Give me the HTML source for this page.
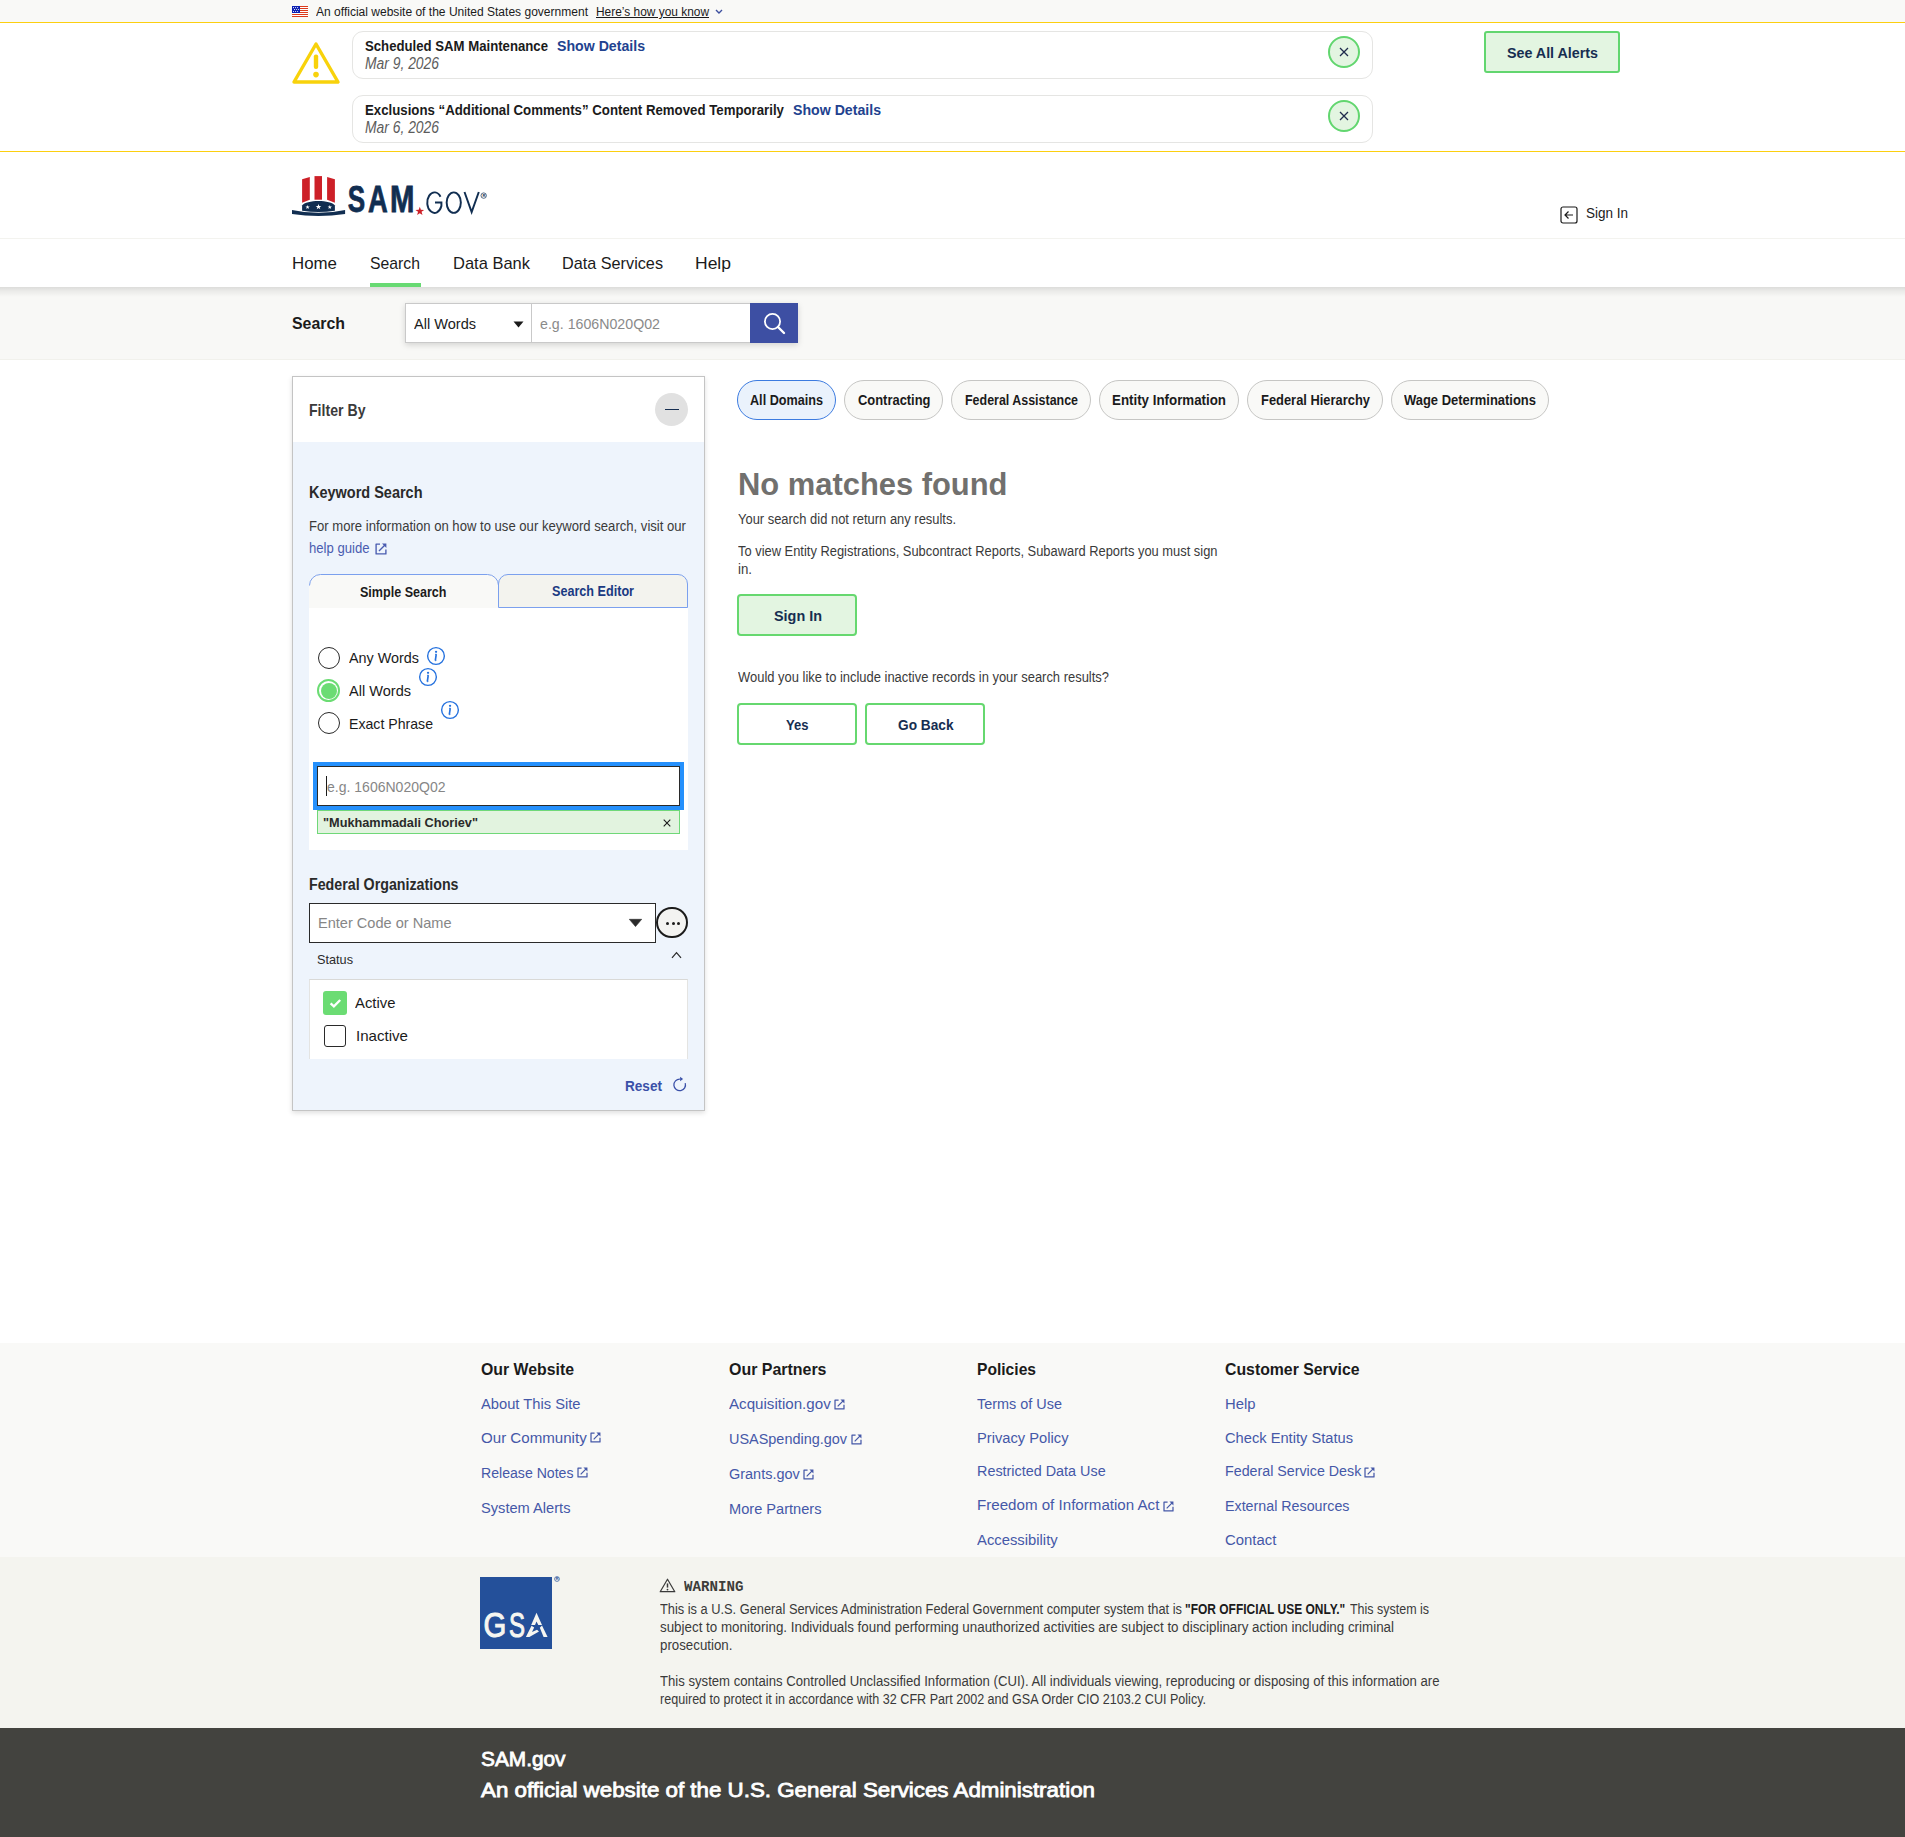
<!DOCTYPE html>
<html lang="en"><head>
<meta charset="utf-8">
<title>SAM.gov | Search</title>
<style>
*{box-sizing:border-box;margin:0;padding:0}
html,body{width:1905px;height:1837px;overflow:hidden;background:#fff}
body{position:relative;font-family:"Liberation Sans",sans-serif;color:#1b1b1b;font-size:15px}
.a{position:absolute}
.t{position:absolute;white-space:nowrap;line-height:1;display:block}
.b{font-weight:700}
.i{font-style:italic}
.lnk{color:#3d4f9f}
svg{position:absolute;overflow:visible}

.pill{top:380px;height:40px;border-radius:20px;background:#f9f9f7;border:1px solid #c6c6c4}
.fh{top:1360.5px;font-size:17px;color:#1b1b1b}
.fl{font-size:15.5px;color:#4558a8}
.fx{color:#4558a8}
.wp{font-size:13.8px;color:#3a3a3a}
.sb{font-weight:400;-webkit-text-stroke:0.8px #fff}
</style>
</head>
<body>
<svg width="0" height="0" style="left:0;top:0"><defs>
<g id="ext"><path d="M5.0 1.1 H1.1 V10.9 H10.9 V6.4" fill="none" stroke="currentColor" stroke-width="1.35" stroke-linejoin="round"></path><path d="M4.0 8.0 L10.2 1.8" fill="none" stroke="currentColor" stroke-width="1.35"></path><path d="M7.0 0.6 H11.4 V5.0 Z" fill="currentColor"></path></g>
<g id="info"><circle cx="9" cy="9" r="8.35" fill="none" stroke="#2672de" stroke-width="1.4"></circle><circle cx="9.05" cy="4.85" r="1.15" fill="#2672de"></circle><path d="M9.25 7.2 L8.3 13.7" stroke="#2672de" stroke-width="1.65" fill="none"></path><path d="M8.0 7.4 L9.4 7.1 M8.0 13.8 L9.3 13.5" stroke="#2672de" stroke-width="0.8" fill="none"></path></g>
</defs></svg>

<!-- ===== GOV BANNER ===== -->
<div class="a" style="left:0;top:0;width:1905px;height:22px;background:#f9f9f7"></div>
<svg style="left:292px;top:6px" width="16" height="11" viewBox="0 0 16 11"><rect width="16" height="11" fill="#fff"></rect><g fill="#dc3a1c" shape-rendering="crispEdges"><rect y="0" width="16" height="1"></rect><rect y="2" width="16" height="1"></rect><rect y="4" width="16" height="1"></rect><rect y="6" width="16" height="1"></rect><rect y="8" width="16" height="1"></rect><rect y="10" width="16" height="1"></rect></g><rect width="8" height="7" fill="#0d20b3" shape-rendering="crispEdges"></rect><g fill="#fff"><circle cx="1.5" cy="1.6" r=".55"></circle><circle cx="3.6" cy="1.6" r=".55"></circle><circle cx="5.6" cy="1.6" r=".55"></circle><circle cx="2.5" cy="3.55" r=".55"></circle><circle cx="4.6" cy="3.55" r=".55"></circle><circle cx="6.6" cy="3.55" r=".55"></circle><circle cx="1.5" cy="5.5" r=".55"></circle><circle cx="3.6" cy="5.5" r=".55"></circle><circle cx="5.6" cy="5.5" r=".55"></circle></g></svg>
<span class="t" style="left: 316px; top: 6px; font-size: 12px; color: rgb(27, 27, 27); white-space: nowrap; transform-origin: 0px 50%; transform: scaleX(1.0027);">An official website of the United States government</span>
<span class="t" style="left: 596px; top: 6px; font-size: 12px; color: rgb(27, 27, 27); text-decoration: underline; white-space: nowrap; transform-origin: 0px 50%; transform: scaleX(0.9926);">Here’s how you know</span>
<svg style="left:715px;top:9px" width="8" height="6" viewBox="0 0 8 6"><path d="M1 1 L4 4 L7 1" fill="none" stroke="#3d4f9f" stroke-width="1.4"></path></svg>

<!-- ===== ALERTS ===== -->
<div class="a" style="left:0;top:22px;width:1905px;height:130px;background:#fff;border-top:1px solid #fccf10;border-bottom:1px solid #fccf10"></div>
<svg style="left:291px;top:41px" width="50" height="44" viewBox="0 0 50 44">
  <path d="M25 3 L47 41 L3 41 Z" fill="none" stroke="#f8d20b" stroke-width="3.4" stroke-linejoin="round"></path>
  <rect x="22.8" y="13.5" width="4.4" height="14.5" rx="2" fill="#f8d20b"></rect>
  <circle cx="25" cy="33.6" r="2.8" fill="#f8d20b"></circle>
</svg>
<div class="a" style="left:352px;top:31px;width:1021px;height:48px;border:1px solid #e5e5e3;border-radius:11px;background:#fff"></div>
<div class="a" style="left:352px;top:95px;width:1021px;height:48px;border:1px solid #e5e5e3;border-radius:11px;background:#fff"></div>
<span class="t b" style="left: 365px; top: 39.2px; font-size: 14.6px; white-space: nowrap; transform-origin: 0px 50%; transform: scaleX(0.9027);">Scheduled SAM Maintenance</span>
<span class="t b" style="left: 557px; top: 39.2px; font-size: 14.6px; color: rgb(34, 66, 143); white-space: nowrap; transform-origin: 0px 50%; transform: scaleX(0.9689);">Show Details</span>
<span class="t i" style="left: 365px; top: 56px; font-size: 15.8px; color: rgb(92, 92, 92); white-space: nowrap; transform-origin: 0px 50%; transform: scaleX(0.8777);">Mar 9, 2026</span>
<span class="t b" style="left: 365px; top: 103px; font-size: 14.6px; white-space: nowrap; transform-origin: 0px 50%; transform: scaleX(0.907);">Exclusions “Additional Comments” Content Removed Temporarily</span>
<span class="t b" style="left: 793px; top: 103px; font-size: 14.6px; color: rgb(34, 66, 143); white-space: nowrap; transform-origin: 0px 50%; transform: scaleX(0.9689);">Show Details</span>
<span class="t i" style="left: 365px; top: 120px; font-size: 15.8px; color: rgb(92, 92, 92); white-space: nowrap; transform-origin: 0px 50%; transform: scaleX(0.8777);">Mar 6, 2026</span>
<!-- close circles -->
<div class="a" style="left:1328px;top:36px;width:32px;height:32px;border-radius:50%;background:#e3f5e1;border:2px solid #62d66f"></div>
<svg style="left:1339px;top:47px" width="10" height="10" viewBox="0 0 10 10"><path d="M1 1 L9 9 M9 1 L1 9" stroke="#1f2b4d" stroke-width="1.3" fill="none"></path></svg>
<div class="a" style="left:1328px;top:100px;width:32px;height:32px;border-radius:50%;background:#e3f5e1;border:2px solid #62d66f"></div>
<svg style="left:1339px;top:111px" width="10" height="10" viewBox="0 0 10 10"><path d="M1 1 L9 9 M9 1 L1 9" stroke="#1f2b4d" stroke-width="1.3" fill="none"></path></svg>
<!-- See all alerts -->
<div class="a" style="left:1484px;top:31px;width:136px;height:42px;border-radius:3px;background:#e3f5e1;border:2px solid #62d66f"></div>
<span class="t b" style="left: 1507px; top: 45px; font-size: 15px; color: rgb(22, 46, 81); white-space: nowrap; transform-origin: 0px 50%; transform: scaleX(0.9518);">See All Alerts</span>

<!-- ===== HEADER ===== -->
<div class="a" style="left:0;top:238px;width:1905px;height:1px;background:#f3f3ef"></div>
<svg style="left:288px;top:172px" width="204" height="48" viewBox="0 0 204 48">
  <g fill="#cd2028">
    <path d="M14.1 7.3 L21.8 5.1 L21.8 27.7 L14.1 30.7 Z"></path>
    <rect x="26.5" y="4.1" width="7.5" height="23.6"></rect>
    <path d="M39.1 5.1 L46.9 7.3 L46.9 30.7 L39.1 27.7 Z"></path>
  </g>
  <g fill="#112e51">
    <path d="M14.1 33.6 C18 27.4 43 27.4 46.9 33.6 L46.9 38.7 Q30.5 41.2 14.1 38.7 Z"></path>
    <path d="M4 37.9 Q30.5 43.7 57.1 37.9 L57.1 42 Q30.5 46.2 4 42 Z"></path>
  </g>
  <g fill="#fff">
    <polygon points="19.60,32.90 20.14,34.46 21.79,34.49 20.47,35.48 20.95,37.06 19.60,36.12 18.25,37.06 18.73,35.48 17.41,34.49 19.06,34.46"></polygon>
    <polygon points="30.50,31.90 31.21,33.93 33.35,33.97 31.64,35.27 32.26,37.33 30.50,36.10 28.74,37.33 29.36,35.27 27.65,33.97 29.79,33.93"></polygon>
    <polygon points="41.80,32.90 42.34,34.46 43.99,34.49 42.67,35.48 43.15,37.06 41.80,36.12 40.45,37.06 40.93,35.48 39.61,34.49 41.26,34.46"></polygon>
  </g>
  <g font-family="Liberation Sans, sans-serif" font-weight="700" font-size="37.1" fill="#112e51" stroke="#112e51" stroke-width="0.8"><text x="59.78" y="40.1" textLength="17.39" lengthAdjust="spacingAndGlyphs">S</text><text x="79.95" y="40.1" textLength="19.75" lengthAdjust="spacingAndGlyphs">A</text><text x="102.04" y="40.1" textLength="24.40" lengthAdjust="spacingAndGlyphs">M</text></g>
  <polygon fill="#cd2028" points="131.80,34.70 132.88,37.81 136.17,37.88 133.55,39.87 134.50,43.02 131.80,41.14 129.10,43.02 130.05,39.87 127.43,37.88 130.72,37.81"></polygon>
  <g fill="none" stroke="#112e51" stroke-width="1.95">
    <path d="M152.5 24.7 A7.3 10.25 0 1 0 153.4 34.1 L153.4 30.4 L147 30.4"></path>
    <ellipse cx="165.75" cy="30.6" rx="7.1" ry="10.25"></ellipse>
    <path d="M176.5 20 L183.65 40.2 L190.8 20" stroke-linejoin="miter"></path>
    <circle cx="195.7" cy="23.6" r="2.7" stroke-width="0.7"></circle>
  </g>
  <text x="194.4" y="25.1" font-family="Liberation Sans, sans-serif" font-weight="700" font-size="4.2" fill="#112e51">R</text>
</svg>
<svg style="left:1559.5px;top:205.5px" width="18" height="18" viewBox="0 0 18 18">
  <rect x="1" y="1" width="16" height="16" rx="2" fill="none" stroke="#1b1b1b" stroke-width="1.2"></rect>
  <path d="M13 9 L5 9 M8.5 5.5 L5 9 L8.5 12.5" fill="none" stroke="#1b1b1b" stroke-width="1.2"></path>
</svg>
<span class="t" style="left: 1586px; top: 205px; font-size: 15.5px; color: rgb(27, 27, 27); white-space: nowrap; transform-origin: 0px 50%; transform: scaleX(0.8702);">Sign In</span>

<!-- ===== NAV ===== -->
<span class="t" style="left: 292px; top: 255px; font-size: 17px; white-space: nowrap; transform-origin: 0px 50%; transform: scaleX(0.9921);">Home</span>
<span class="t" style="left: 370px; top: 255px; font-size: 17px; white-space: nowrap; transform-origin: 0px 50%; transform: scaleX(0.9281);">Search</span>
<span class="t" style="left: 453px; top: 255px; font-size: 17px; white-space: nowrap; transform-origin: 0px 50%; transform: scaleX(0.9699);">Data Bank</span>
<span class="t" style="left: 562px; top: 255px; font-size: 17px; white-space: nowrap; transform-origin: 0px 50%; transform: scaleX(0.9544);">Data Services</span>
<span class="t" style="left: 695px; top: 255px; font-size: 17px; white-space: nowrap; transform-origin: 0px 50%; transform: scaleX(1.0295);">Help</span>
<div class="a" style="left:370px;top:283px;width:51px;height:4px;background:#68da73"></div>

<!-- ===== SEARCH BAR ===== -->
<div class="a" style="left:0;top:287px;width:1905px;height:73px;background:linear-gradient(to bottom,rgba(0,0,0,.115) 0,rgba(0,0,0,.055) 4px,rgba(0,0,0,0) 10px),#f8f8f6;border-bottom:1px solid #f1f1ec"></div>
<span class="t b" style="left: 292px; top: 315px; font-size: 17px; white-space: nowrap; transform-origin: 0px 50%; transform: scaleX(0.9347);">Search</span>
<div class="a" style="left:405px;top:303px;width:393px;height:40px;background:#fff;border:1px solid #c9c9c9;box-shadow:0 2px 6px rgba(0,0,0,.15)"></div>
<div class="a" style="left:531px;top:304px;width:1px;height:38px;background:#c9c9c9"></div>
<span class="t" style="left: 414px; top: 316px; font-size: 15px; white-space: nowrap; transform-origin: 0px 50%; transform: scaleX(0.9702);">All Words</span>
<svg style="left:513px;top:321px" width="11" height="7" viewBox="0 0 11 7"><path d="M0.5 0.5 L10.5 0.5 L5.5 6.5 Z" fill="#1b1b1b"></path></svg>
<span class="t" style="left: 540px; top: 316px; font-size: 15px; color: rgb(138, 138, 138); white-space: nowrap; transform-origin: 0px 50%; transform: scaleX(0.9465);">e.g. 1606N020Q02</span>
<div class="a" style="left:750px;top:303px;width:48px;height:40px;background:#3d4fa3"></div>
<svg style="left:762px;top:311px" width="24" height="24" viewBox="0 0 24 24"><circle cx="10.5" cy="10.5" r="7.6" fill="none" stroke="#fff" stroke-width="1.8"></circle><path d="M16 16 L22 22" stroke="#fff" stroke-width="2.4" stroke-linecap="round"></path></svg>


<!-- ===== FILTER PANEL ===== -->
<div class="a" style="left:292px;top:376px;width:413px;height:735px;background:#eef4fc;border:1px solid #c4c4c4;box-shadow:0 2px 5px rgba(0,0,0,.13)"></div>
<div class="a" style="left:293px;top:377px;width:411px;height:65px;background:#fff"></div>
<span class="t b" style="left: 309px; top: 402px; font-size: 16.5px; color: rgb(59, 59, 59); white-space: nowrap; transform-origin: 0px 50%; transform: scaleX(0.8557);">Filter By</span>
<div class="a" style="left:655px;top:393px;width:33px;height:33px;border-radius:50%;background:#e1e1e1"></div>
<div class="a" style="left:665px;top:409px;width:14px;height:1px;background:#162e51"></div>

<span class="t b" style="left: 309px; top: 485px; font-size: 15.6px; color: rgb(42, 42, 42); white-space: nowrap; transform-origin: 0px 50%; transform: scaleX(0.9288);">Keyword Search</span>
<span class="t" style="left: 309px; top: 518.7px; font-size: 14px; color: rgb(58, 58, 58); white-space: nowrap; transform-origin: 0px 50%; transform: scaleX(0.9353);">For more information on how to use our keyword search, visit our</span>
<span class="t" style="left: 309px; top: 540.7px; font-size: 14px; color: rgb(74, 92, 176); white-space: nowrap; transform-origin: 0px 50%; transform: scaleX(0.9362);">help guide</span>
<svg style="left:374.5px;top:543px;color:#4a5cb0" width="13" height="12" viewBox="0 0 13 12"><use href="#ext"></use></svg>

<!-- tabs -->
<div class="a" style="left:309px;top:574px;width:190px;height:34px;background:#f9f9f7;border-radius:10px 10px 0 0"></div>
<svg style="left:309px;top:574px" width="190" height="14" viewBox="0 0 190 14"><path d="M0.5 11.5 A11 11 0 0 1 11.5 0.5 L178.5 0.5 A11 11 0 0 1 189.5 11.5" fill="none" stroke="#7ba0ee" stroke-width="1"></path></svg>
<div class="a" style="left:498px;top:574px;width:190px;height:34px;background:#f3f3ee;border:1px solid #7ba0ee;border-radius:10px 10px 0 0"></div>
<span class="t b" style="left: 360px; top: 585px; font-size: 14px; color: rgb(27, 27, 27); white-space: nowrap; transform-origin: 0px 50%; transform: scaleX(0.8964);">Simple Search</span>
<span class="t b" style="left: 552px; top: 584px; font-size: 14px; color: rgb(26, 58, 130); white-space: nowrap; transform-origin: 0px 50%; transform: scaleX(0.9008);">Search Editor</span>
<div class="a" style="left:309px;top:608px;width:379px;height:242px;background:#fff"></div>

<!-- radios -->
<div class="a" style="left:318px;top:647px;width:22px;height:22px;border-radius:50%;border:1.5px solid #2a2a2a;background:#fff"></div>
<div class="a" style="left:317px;top:679px;width:23px;height:23px;border-radius:50%;border:2px solid #6bdc73;background:#fff"></div>
<div class="a" style="left:320.5px;top:682.5px;width:16px;height:16px;border-radius:50%;background:#6bdc73"></div>
<div class="a" style="left:318px;top:712px;width:22px;height:22px;border-radius:50%;border:1.5px solid #2a2a2a;background:#fff"></div>
<span class="t" style="left: 349px; top: 649.5px; font-size: 15px; color: rgb(27, 27, 27); white-space: nowrap; transform-origin: 0px 50%; transform: scaleX(0.9577);">Any Words</span>
<span class="t" style="left: 349px; top: 682.5px; font-size: 15px; color: rgb(27, 27, 27); white-space: nowrap; transform-origin: 0px 50%; transform: scaleX(0.9702);">All Words</span>
<span class="t" style="left: 349px; top: 715.5px; font-size: 15px; color: rgb(27, 27, 27); white-space: nowrap; transform-origin: 0px 50%; transform: scaleX(0.9415);">Exact Phrase</span>
<svg style="left:427.2px;top:647.2px" width="18" height="18" viewBox="0 0 18 18"><use href="#info"></use></svg>
<svg style="left:419.1px;top:668.2px" width="18" height="18" viewBox="0 0 18 18"><use href="#info"></use></svg>
<svg style="left:441.2px;top:701px" width="18" height="18" viewBox="0 0 18 18"><use href="#info"></use></svg>

<!-- focused input -->
<div class="a" style="left:313px;top:762px;width:371px;height:48px;background:#fff;border:4px solid #2590fc"></div>
<div class="a" style="left:317px;top:766px;width:363px;height:40px;background:#fff;border:1px solid #2a2a2a"></div>
<div class="a" style="left:326px;top:776px;width:1px;height:20px;background:#1b1b1b"></div>
<span class="t" style="left: 327px; top: 779px; font-size: 15px; color: rgb(134, 134, 134); white-space: nowrap; transform-origin: 0px 50%; transform: scaleX(0.9347);">e.g. 1606N020Q02</span>
<!-- chip -->
<div class="a" style="left:317px;top:810px;width:363px;height:24px;background:#e2f3df;border:1px solid #6fd878"></div>
<span class="t b" style="left: 322.8px; top: 815.5px; font-size: 13.4px; color: rgb(42, 42, 42); white-space: nowrap; transform-origin: 0px 50%; transform: scaleX(0.9508);">"Mukhammadali Choriev"</span>
<svg style="left:662.7px;top:819px" width="8" height="8" viewBox="0 0 8 8"><path d="M0.7 0.7 L7.3 7.3 M7.3 0.7 L0.7 7.3" stroke="#1b1b1b" stroke-width="1.1" fill="none"></path></svg>

<!-- Federal orgs -->
<span class="t b" style="left: 309px; top: 877px; font-size: 15.6px; color: rgb(42, 42, 42); white-space: nowrap; transform-origin: 0px 50%; transform: scaleX(0.9128);">Federal Organizations</span>
<div class="a" style="left:309px;top:903px;width:347px;height:40px;background:#fff;border:1px solid #2a2a2a"></div>
<span class="t" style="left: 318px; top: 915.3px; font-size: 15px; color: rgb(134, 134, 134); white-space: nowrap; transform-origin: 0px 50%; transform: scaleX(0.9704);">Enter Code or Name</span>
<svg style="left:629.3px;top:918.7px" width="13" height="8" viewBox="0 0 13 8"><path d="M0.3 0.3 L12.7 0.3 L6.5 7.6 Z" fill="#2a2a2a" stroke="#2a2a2a" stroke-width=".6" stroke-linejoin="round"></path></svg>
<div class="a" style="left:656px;top:906.8px;width:31.5px;height:31.5px;border-radius:50%;background:#f3f3f1;border:2px solid #1b1b1b"></div>
<div class="a" style="left:666.3px;top:922px;width:3px;height:3px;border-radius:50%;background:#1b1b1b"></div>
<div class="a" style="left:671.8px;top:922px;width:3px;height:3px;border-radius:50%;background:#1b1b1b"></div>
<div class="a" style="left:677.3px;top:922px;width:3px;height:3px;border-radius:50%;background:#1b1b1b"></div>

<!-- Status -->
<span class="t" style="left: 316.8px; top: 952.5px; font-size: 13.2px; color: rgb(42, 42, 42); white-space: nowrap; transform-origin: 0px 50%; transform: scaleX(0.9628);">Status</span>
<svg style="left:670.8px;top:950.8px" width="11" height="8" viewBox="0 0 11 8"><path d="M1 6.8 L5.5 1.6 L10 6.8" fill="none" stroke="#2a2a2a" stroke-width="1.2"></path></svg>
<div class="a" style="left:309px;top:979px;width:379px;height:80px;background:#fff;border:1px solid #e4e4e2;border-top:1.5px solid #d9d9d7;border-bottom:none"></div>
<div class="a" style="left:323px;top:991px;width:24px;height:24px;border-radius:3px;background:#6bdc73"></div>
<svg style="left:329px;top:997.5px" width="13" height="11" viewBox="0 0 13 11"><path d="M1.6 5.3 L4.9 8.4 L11.2 2" fill="none" stroke="#fff" stroke-width="2.3"></path></svg>
<span class="t" style="left: 355px; top: 995.3px; font-size: 15px; color: rgb(27, 27, 27); white-space: nowrap; transform-origin: 0px 50%; transform: scaleX(0.9912);">Active</span>
<div class="a" style="left:324px;top:1025px;width:22px;height:22px;border-radius:3px;background:#fff;border:1.5px solid #2a2a2a"></div>
<span class="t" style="left: 355.5px; top: 1028px; font-size: 15px; color: rgb(27, 27, 27); white-space: nowrap; transform-origin: 0px 50%; transform: scaleX(1.0057);">Inactive</span>

<span class="t b" style="left: 624.8px; top: 1078.3px; font-size: 15px; color: rgb(58, 80, 168); white-space: nowrap; transform-origin: 0px 50%; transform: scaleX(0.9055);">Reset</span>
<svg style="left:672px;top:1076.5px" width="16" height="16" viewBox="0 0 16 16"><path d="M13.2 6.1 A5.8 5.8 0 1 1 7.9 2.1" fill="none" stroke="#3a50a8" stroke-width="1.25"></path><path d="M8.1 -0.3 L11.1 2.0 L8.1 4.3 Z" fill="#3a50a8"></path></svg>


<!-- ===== RESULTS ===== -->
<div class="a" style="left:737px;top:380px;width:99px;height:40px;border-radius:20px;background:#eaf2fc;border:1.5px solid #3c7be0"></div>
<div class="a pill" style="left:844px;width:99px"></div>
<div class="a pill" style="left:951px;width:140px"></div>
<div class="a pill" style="left:1099px;width:140px"></div>
<div class="a pill" style="left:1247px;width:136px"></div>
<div class="a pill" style="left:1391px;width:158px"></div>
<span class="t b" style="left: 750px; top: 394.2px; font-size: 13.8px; color: rgb(27, 27, 27); white-space: nowrap; transform-origin: 0px 50%; transform: scaleX(0.9155);">All Domains</span>
<span class="t b" style="left: 857.5px; top: 394.2px; font-size: 13.8px; color: rgb(27, 27, 27); white-space: nowrap; transform-origin: 0px 50%; transform: scaleX(0.9364);">Contracting</span>
<span class="t b" style="left: 964.5px; top: 394.2px; font-size: 13.8px; color: rgb(27, 27, 27); white-space: nowrap; transform-origin: 0px 50%; transform: scaleX(0.9021);">Federal Assistance</span>
<span class="t b" style="left: 1112px; top: 394.2px; font-size: 13.8px; color: rgb(27, 27, 27); white-space: nowrap; transform-origin: 0px 50%; transform: scaleX(0.9657);">Entity Information</span>
<span class="t b" style="left: 1260.5px; top: 394.2px; font-size: 13.8px; color: rgb(27, 27, 27); white-space: nowrap; transform-origin: 0px 50%; transform: scaleX(0.935);">Federal Hierarchy</span>
<span class="t b" style="left: 1403.5px; top: 394.2px; font-size: 13.8px; color: rgb(27, 27, 27); white-space: nowrap; transform-origin: 0px 50%; transform: scaleX(0.9391);">Wage Determinations</span>

<span class="t b" style="left: 738px; top: 468.5px; font-size: 31px; color: rgb(113, 112, 110); white-space: nowrap; transform-origin: 0px 50%; transform: scaleX(0.9966);">No matches found</span>
<span class="t" style="left: 737.5px; top: 512px; font-size: 14px; color: rgb(58, 58, 58); white-space: nowrap; transform-origin: 0px 50%; transform: scaleX(0.9235);">Your search did not return any results.</span>
<span class="t" style="left: 737.5px; top: 543.8px; font-size: 14px; color: rgb(58, 58, 58); white-space: nowrap; transform-origin: 0px 50%; transform: scaleX(0.9211);">To view Entity Registrations, Subcontract Reports, Subaward Reports you must sign</span>
<span class="t" style="left: 737.5px; top: 561.5px; font-size: 14px; color: rgb(58, 58, 58); white-space: nowrap; transform-origin: 0px 50%; transform: scaleX(0.9461);">in.</span>

<div class="a" style="left:737px;top:594px;width:120px;height:42px;border-radius:4px;background:#e3f5e1;border:2px solid #66d86f"></div>
<span class="t b" style="left: 773.5px; top: 608px; font-size: 15px; color: rgb(22, 46, 81); white-space: nowrap; transform-origin: 0px 50%; transform: scaleX(0.96);">Sign In</span>

<span class="t" style="left: 737.5px; top: 670px; font-size: 14px; color: rgb(58, 58, 58); white-space: nowrap; transform-origin: 0px 50%; transform: scaleX(0.9245);">Would you like to include inactive records in your search results?</span>
<div class="a" style="left:737px;top:703px;width:120px;height:42px;border-radius:4px;background:#fff;border:2px solid #66d86f"></div>
<div class="a" style="left:865px;top:703px;width:120px;height:42px;border-radius:4px;background:#fff;border:2px solid #66d86f"></div>
<span class="t b" style="left: 786px; top: 717.2px; font-size: 15px; color: rgb(22, 46, 81); white-space: nowrap; transform-origin: 0px 50%; transform: scaleX(0.8696);">Yes</span>
<span class="t b" style="left: 897.5px; top: 717.2px; font-size: 15px; color: rgb(22, 46, 81); white-space: nowrap; transform-origin: 0px 50%; transform: scaleX(0.9119);">Go Back</span>


<!-- ===== FOOTER ===== -->
<div class="a" style="left:0;top:1343px;width:1905px;height:214px;background:#f9f9f7"></div>
<div class="a" style="left:0;top:1557px;width:1905px;height:171px;background:#f4f4ef"></div>
<div class="a" style="left:0;top:1728px;width:1905px;height:109px;background:#43433f"></div>

<span class="t b fh" style="left: 480.5px; white-space: nowrap; transform-origin: 0px 50%; transform: scaleX(0.9316);">Our Website</span>
<span class="t b fh" style="left: 728.5px; white-space: nowrap; transform-origin: 0px 50%; transform: scaleX(0.9381);">Our Partners</span>
<span class="t b fh" style="left: 976.5px; white-space: nowrap; transform-origin: 0px 50%; transform: scaleX(0.9181);">Policies</span>
<span class="t b fh" style="left: 1224.5px; white-space: nowrap; transform-origin: 0px 50%; transform: scaleX(0.9303);">Customer Service</span>

<span class="t fl" style="left: 480.5px; top: 1395.5px; white-space: nowrap; transform-origin: 0px 50%; transform: scaleX(0.949);">About This Site</span>
<span class="t fl" style="left: 480.5px; top: 1429.8px; white-space: nowrap; transform-origin: 0px 50%; transform: scaleX(0.9739);">Our Community</span>
<span class="t fl" style="left: 480.5px; top: 1464.8px; white-space: nowrap; transform-origin: 0px 50%; transform: scaleX(0.9098);">Release Notes</span>
<span class="t fl" style="left: 480.5px; top: 1499.8px; white-space: nowrap; transform-origin: 0px 50%; transform: scaleX(0.9446);">System Alerts</span>
<svg class="fx" style="left:590.3px;top:1432.4px" width="11" height="11" viewBox="0 0 12 12"><use href="#ext"></use></svg>
<svg class="fx" style="left:576.6px;top:1467.4px" width="11" height="11" viewBox="0 0 12 12"><use href="#ext"></use></svg>

<span class="t fl" style="left: 728.5px; top: 1395.5px; white-space: nowrap; transform-origin: 0px 50%; transform: scaleX(0.9754);">Acquisition.gov</span>
<span class="t fl" style="left: 728.5px; top: 1430.5px; white-space: nowrap; transform-origin: 0px 50%; transform: scaleX(0.9315);">USASpending.gov</span>
<span class="t fl" style="left: 728.5px; top: 1465.5px; white-space: nowrap; transform-origin: 0px 50%; transform: scaleX(0.9326);">Grants.gov</span>
<span class="t fl" style="left: 728.5px; top: 1500.5px; white-space: nowrap; transform-origin: 0px 50%; transform: scaleX(0.9419);">More Partners</span>
<svg class="fx" style="left:834px;top:1399px" width="11" height="11" viewBox="0 0 12 12"><use href="#ext"></use></svg>
<svg class="fx" style="left:850.5px;top:1434px" width="11" height="11" viewBox="0 0 12 12"><use href="#ext"></use></svg>
<svg class="fx" style="left:803px;top:1469px" width="11" height="11" viewBox="0 0 12 12"><use href="#ext"></use></svg>

<span class="t fl" style="left: 976.5px; top: 1395.5px; white-space: nowrap; transform-origin: 0px 50%; transform: scaleX(0.9309);">Terms of Use</span>
<span class="t fl" style="left: 976.5px; top: 1429.8px; white-space: nowrap; transform-origin: 0px 50%; transform: scaleX(0.9485);">Privacy Policy</span>
<span class="t fl" style="left: 976.5px; top: 1463px; white-space: nowrap; transform-origin: 0px 50%; transform: scaleX(0.9279);">Restricted Data Use</span>
<span class="t fl" style="left: 976.5px; top: 1496.8px; white-space: nowrap; transform-origin: 0px 50%; transform: scaleX(0.9756);">Freedom of Information Act</span>
<span class="t fl" style="left: 976.5px; top: 1531.8px; white-space: nowrap; transform-origin: 0px 50%; transform: scaleX(0.9559);">Accessibility</span>
<svg class="fx" style="left:1162.8px;top:1500.5px" width="11" height="11" viewBox="0 0 12 12"><use href="#ext"></use></svg>

<span class="t fl" style="left: 1224.5px; top: 1395.5px; white-space: nowrap; transform-origin: 0px 50%; transform: scaleX(0.9564);">Help</span>
<span class="t fl" style="left: 1224.5px; top: 1429.8px; white-space: nowrap; transform-origin: 0px 50%; transform: scaleX(0.9463);">Check Entity Status</span>
<span class="t fl" style="left: 1224.5px; top: 1463px; white-space: nowrap; transform-origin: 0px 50%; transform: scaleX(0.9199);">Federal Service Desk</span>
<span class="t fl" style="left: 1224.5px; top: 1497.5px; white-space: nowrap; transform-origin: 0px 50%; transform: scaleX(0.9204);">External Resources</span>
<span class="t fl" style="left: 1224.5px; top: 1531.8px; white-space: nowrap; transform-origin: 0px 50%; transform: scaleX(0.9603);">Contact</span>
<svg class="fx" style="left:1364.4px;top:1466.6px" width="11" height="11" viewBox="0 0 12 12"><use href="#ext"></use></svg>

<!-- GSA -->
<div class="a" style="left:480px;top:1577px;width:72px;height:72px;background:#24509a"></div>
<svg style="left:480px;top:1577px" width="72" height="72" viewBox="0 0 72 72">
  <g fill="#f6f6f1" stroke="#f6f6f1" stroke-width="1.0" font-family="Liberation Sans, sans-serif" font-size="34.2">
    <text x="3.5" y="60.2" textLength="22.8" lengthAdjust="spacingAndGlyphs">G</text>
    <text x="28.9" y="60.2" textLength="16.0" lengthAdjust="spacingAndGlyphs">S</text>
  </g>
  <g fill="#f6f6f1">
    <polygon points="56.5,35.8 62.0,47.9 58.3,47.9 56.5,44.4 55.0,47.9 51.2,47.9"></polygon>
    <polygon points="51.5,48.7 54.2,50.5 52.0,55.0 57.0,52.7 59.0,54.5 49.4,60.0 45.9,60.0"></polygon>
    <polygon points="62.0,48.4 67.6,60.0 63.6,60.0 59.8,50.7"></polygon>
  </g>
</svg>
<svg style="left:554px;top:1576.3px" width="6" height="6" viewBox="0 0 6 6"><circle cx="3" cy="3" r="2.4" fill="none" stroke="#24509a" stroke-width=".7"></circle><text x="1.7" y="4.4" font-family="Liberation Sans, sans-serif" font-size="3.8" font-weight="700" fill="#24509a">R</text></svg>

<svg style="left:659px;top:1578px" width="17" height="15" viewBox="0 0 17 15"><path d="M8.5 1.2 L15.8 13.7 L1.2 13.7 Z" fill="none" stroke="#3a3a3a" stroke-width="1.2" stroke-linejoin="round"></path><path d="M8.5 5.4 L8.5 9.6" stroke="#3a3a3a" stroke-width="1.5"></path><circle cx="8.5" cy="11.6" r=".9" fill="#3a3a3a"></circle></svg>
<span class="t b" style="left: 683.5px; top: 1579.8px; font-family: &quot;Liberation Mono&quot;, monospace; font-size: 15.5px; color: rgb(61, 61, 58); white-space: nowrap; transform-origin: 0px 50%; transform: scaleX(0.9136);">WARNING</span>

<span class="t wp" style="left: 659.5px; top: 1602.5px; white-space: nowrap; transform-origin: 0px 50%; transform: scaleX(0.9287);">This is a U.S. General Services Administration Federal Government computer system that is</span>
<span class="t wp b" style="left: 1185.3px; top: 1602.5px; color: rgb(27, 27, 27); white-space: nowrap; transform-origin: 0px 50%; transform: scaleX(0.8674);">"FOR OFFICIAL USE ONLY."</span>
<span class="t wp" style="left: 1349.5px; top: 1602.5px; white-space: nowrap; transform-origin: 0px 50%; transform: scaleX(0.904);">This system is</span>
<span class="t wp" style="left: 659.5px; top: 1620.5px; white-space: nowrap; transform-origin: 0px 50%; transform: scaleX(0.9687);">subject to monitoring. Individuals found performing unauthorized activities are subject to disciplinary action including criminal</span>
<span class="t wp" style="left: 659.5px; top: 1638.5px; white-space: nowrap; transform-origin: 0px 50%; transform: scaleX(0.9631);">prosecution.</span>
<span class="t wp" style="left: 659.5px; top: 1674.5px; white-space: nowrap; transform-origin: 0px 50%; transform: scaleX(0.9518);">This system contains Controlled Unclassified Information (CUI). All individuals viewing, reproducing or disposing of this information are</span>
<span class="t wp" style="left: 659.5px; top: 1692.5px; white-space: nowrap; transform-origin: 0px 50%; transform: scaleX(0.9109);">required to protect it in accordance with 32 CFR Part 2002 and GSA Order CIO 2103.2 CUI Policy.</span>

<span class="t sb" style="left: 480.5px; top: 1749px; font-size: 20.5px; color: rgb(255, 255, 255); white-space: nowrap; transform-origin: 0px 50%; transform: scaleX(1.016);">SAM.gov</span>
<span class="t sb" style="left: 480.5px; top: 1779.5px; font-size: 20.5px; color: rgb(255, 255, 255); white-space: nowrap; transform-origin: 0px 50%; transform: scaleX(1.0893);">An official website of the U.S. General Services Administration</span>



</body></html>
